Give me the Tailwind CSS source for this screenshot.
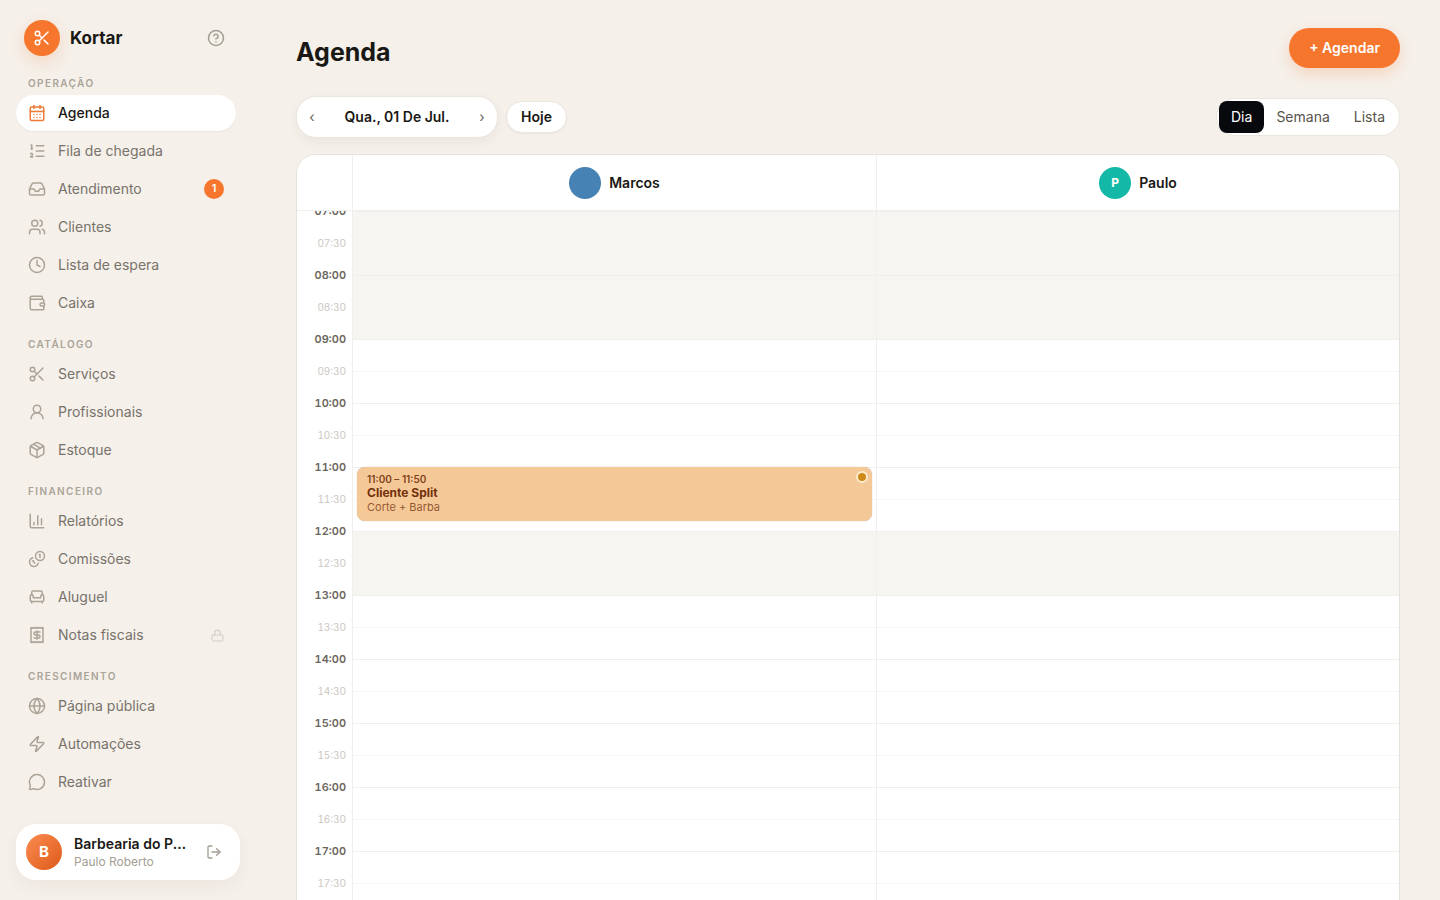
<!DOCTYPE html>
<html lang="pt-BR">
<head>
    <meta charset="UTF-8">
    <meta name="viewport" content="width=device-width, initial-scale=1.0">
    <title>Kortar - Agenda</title>
    <script src="https://cdn.jsdelivr.net/npm/@tailwindcss/browser@4"></script>
</head>
<body class="h-screen overflow-hidden flex bg-[#f5f0ea] font-['Inter',sans-serif] text-sm text-[#1a1814]">

    <!-- Menu lateral -->
    <aside class="w-64 h-screen shrink-0 flex flex-col px-4 py-5">
        <div class="flex items-center gap-2.5 pl-2 pr-[15px]">
            <span class="size-9 rounded-full bg-[#f7762e] text-white flex items-center justify-center shadow-[0_6px_16px_rgba(247,118,46,0.2)]">
                <svg class="size-[18px]" viewBox="0 0 24 24" fill="none" stroke="currentColor" stroke-width="2" stroke-linecap="round" stroke-linejoin="round"><circle cx="6" cy="6" r="3"/><path d="M8.12 8.12 12 12"/><path d="M20 4 8.12 15.88"/><circle cx="6" cy="18" r="3"/><path d="M14.8 14.8 20 20"/></svg>
            </span>
            <span class="text-[17px] font-bold leading-6">Kortar</span>
            <button type="button" aria-label="Ajuda" class="ml-auto text-[#a39e94]">
                <svg class="size-[18px]" viewBox="0 0 24 24" fill="none" stroke="currentColor" stroke-width="2" stroke-linecap="round" stroke-linejoin="round"><circle cx="12" cy="12" r="10"/><path d="M9.09 9a3 3 0 0 1 5.83 1c0 2-3 3-3 3"/><path d="M12 17h.01"/></svg>
            </button>
        </div>

        <nav class="flex-1 min-h-0 overflow-hidden mt-1 -mx-4 pl-4 pr-5 flex flex-col text-[#78736a]">
            <h2 class="mt-4 pb-1 px-3 text-[10px] leading-[15px] font-semibold tracking-[0.14em] text-[#aaa498]">OPERAÇÃO</h2>
            <div class="flex flex-col gap-0.5">
                <a href="#" aria-current="page" class="h-9 px-3 flex items-center gap-3 rounded-full bg-white font-medium text-[#1a1814] shadow-xs">
                    <svg class="size-[18px] text-[#ee7a35]" viewBox="0 0 24 24" fill="none" stroke="currentColor" stroke-width="2" stroke-linecap="round" stroke-linejoin="round"><path d="M8 2v4"/><path d="M16 2v4"/><rect width="18" height="18" x="3" y="4" rx="2"/><path d="M3 10h18"/><path d="M8 14h.01"/><path d="M12 14h.01"/><path d="M16 14h.01"/><path d="M8 18h.01"/><path d="M12 18h.01"/><path d="M16 18h.01"/></svg>
                    Agenda
                </a>
                <a href="#" class="h-9 px-3 flex items-center gap-3 rounded-full">
                    <svg class="size-[18px] text-[#aaa498]" viewBox="0 0 24 24" fill="none" stroke="currentColor" stroke-width="2" stroke-linecap="round" stroke-linejoin="round"><path d="M11 5h10"/><path d="M11 12h10"/><path d="M11 19h10"/><path d="M4 4h1v5"/><path d="M4 9h2"/><path d="M6.5 20H3.4c0-1 2.6-1.925 2.6-3.5a1.5 1.5 0 0 0-2.6-1.02"/></svg>
                    Fila de chegada
                </a>
                <a href="#" class="h-9 px-3 flex items-center gap-3 rounded-full">
                    <svg class="size-[18px] text-[#aaa498]" viewBox="0 0 24 24" fill="none" stroke="currentColor" stroke-width="2" stroke-linecap="round" stroke-linejoin="round"><path d="M22 12h-6l-2 3h-4l-2-3H2"/><path d="M5.45 5.11 2 12v6a2 2 0 0 0 2 2h16a2 2 0 0 0 2-2v-6l-3.45-6.89A2 2 0 0 0 16.76 4H7.24a2 2 0 0 0-1.79 1.11z"/></svg>
                    Atendimento
                    <span class="ml-auto size-5 rounded-full bg-[#f7762e] text-white text-[11px] font-semibold flex items-center justify-center">1</span>
                </a>
                <a href="#" class="h-9 px-3 flex items-center gap-3 rounded-full">
                    <svg class="size-[18px] text-[#aaa498]" viewBox="0 0 24 24" fill="none" stroke="currentColor" stroke-width="2" stroke-linecap="round" stroke-linejoin="round"><path d="M16 21v-2a4 4 0 0 0-4-4H6a4 4 0 0 0-4 4v2"/><circle cx="9" cy="7" r="4"/><path d="M22 21v-2a4 4 0 0 0-3-3.87"/><path d="M16 3.13a4 4 0 0 1 0 7.75"/></svg>
                    Clientes
                </a>
                <a href="#" class="h-9 px-3 flex items-center gap-3 rounded-full">
                    <svg class="size-[18px] text-[#aaa498]" viewBox="0 0 24 24" fill="none" stroke="currentColor" stroke-width="2" stroke-linecap="round" stroke-linejoin="round"><circle cx="12" cy="12" r="10"/><path d="M12 6v6l4 2"/></svg>
                    Lista de espera
                </a>
                <a href="#" class="h-9 px-3 flex items-center gap-3 rounded-full">
                    <svg class="size-[18px] text-[#aaa498]" viewBox="0 0 24 24" fill="none" stroke="currentColor" stroke-width="2" stroke-linecap="round" stroke-linejoin="round"><path d="M19 7V4a1 1 0 0 0-1-1H5a2 2 0 0 0 0 4h15a1 1 0 0 1 1 1v4h-3a2 2 0 0 0 0 4h3a1 1 0 0 0 1-1v-2a1 1 0 0 0-1-1"/><path d="M3 5v14a2 2 0 0 0 2 2h15a1 1 0 0 0 1-1v-4"/></svg>
                    Caixa
                </a>
            </div>

            <h2 class="mt-4 pb-1 px-3 text-[10px] leading-[15px] font-semibold tracking-[0.14em] text-[#aaa498]">CATÁLOGO</h2>
            <div class="flex flex-col gap-0.5">
                <a href="#" class="h-9 px-3 flex items-center gap-3 rounded-full">
                    <svg class="size-[18px] text-[#aaa498]" viewBox="0 0 24 24" fill="none" stroke="currentColor" stroke-width="2" stroke-linecap="round" stroke-linejoin="round"><circle cx="6" cy="6" r="3"/><path d="M8.12 8.12 12 12"/><path d="M20 4 8.12 15.88"/><circle cx="6" cy="18" r="3"/><path d="M14.8 14.8 20 20"/></svg>
                    Serviços
                </a>
                <a href="#" class="h-9 px-3 flex items-center gap-3 rounded-full">
                    <svg class="size-[18px] text-[#aaa498]" viewBox="0 0 24 24" fill="none" stroke="currentColor" stroke-width="2" stroke-linecap="round" stroke-linejoin="round"><circle cx="12" cy="8" r="5"/><path d="M20 21a8 8 0 0 0-16 0"/></svg>
                    Profissionais
                </a>
                <a href="#" class="h-9 px-3 flex items-center gap-3 rounded-full">
                    <svg class="size-[18px] text-[#aaa498]" viewBox="0 0 24 24" fill="none" stroke="currentColor" stroke-width="2" stroke-linecap="round" stroke-linejoin="round"><path d="M11 21.73a2 2 0 0 0 2 0l7-4A2 2 0 0 0 21 16V8a2 2 0 0 0-1-1.73l-7-4a2 2 0 0 0-2 0l-7 4A2 2 0 0 0 3 8v8a2 2 0 0 0 1 1.73z"/><path d="M12 22V12"/><path d="M3.29 7 12 12l8.71-5"/><path d="m7.5 4.27 9 5.15"/></svg>
                    Estoque
                </a>
            </div>

            <h2 class="mt-4 pb-1 px-3 text-[10px] leading-[15px] font-semibold tracking-[0.14em] text-[#aaa498]">FINANCEIRO</h2>
            <div class="flex flex-col gap-0.5">
                <a href="#" class="h-9 px-3 flex items-center gap-3 rounded-full">
                    <svg class="size-[18px] text-[#aaa498]" viewBox="0 0 24 24" fill="none" stroke="currentColor" stroke-width="2" stroke-linecap="round" stroke-linejoin="round"><path d="M3 3v16a2 2 0 0 0 2 2h16"/><path d="M18 17V9"/><path d="M13 17V5"/><path d="M8 17v-3"/></svg>
                    Relatórios
                </a>
                <a href="#" class="h-9 px-3 flex items-center gap-3 rounded-full">
                    <svg class="size-[18px] text-[#aaa498]" viewBox="0 0 24 24" fill="none" stroke="currentColor" stroke-width="2" stroke-linecap="round" stroke-linejoin="round"><path d="M13.744 17.736a6 6 0 1 1-7.48-7.48"/><path d="M15 6h1v4"/><path d="m6.134 14.768.866-.5 2 3.464"/><circle cx="16" cy="8" r="6"/></svg>
                    Comissões
                </a>
                <a href="#" class="h-9 px-3 flex items-center gap-3 rounded-full">
                    <svg class="size-[18px] text-[#aaa498]" viewBox="0 0 24 24" fill="none" stroke="currentColor" stroke-width="2" stroke-linecap="round" stroke-linejoin="round"><path d="M19 9V6a2 2 0 0 0-2-2H7a2 2 0 0 0-2 2v3"/><path d="M3 16a2 2 0 0 0 2 2h14a2 2 0 0 0 2-2v-5a2 2 0 0 0-4 0v1.5a.5.5 0 0 1-.5.5h-9a.5.5 0 0 1-.5-.5V11a2 2 0 0 0-4 0z"/><path d="M5 18v2"/><path d="M19 18v2"/></svg>
                    Aluguel
                </a>
                <a href="#" class="h-9 px-3 flex items-center gap-3 rounded-full">
                    <svg class="size-[18px] text-[#aaa498]" viewBox="0 0 24 24" fill="none" stroke="currentColor" stroke-width="2" stroke-linecap="round" stroke-linejoin="round"><path d="M4 2v20l2-1 2 1 2-1 2 1 2-1 2 1 2-1 2 1V2l-2 1-2-1-2 1-2-1-2 1-2-1-2 1Z"/><path d="M16 8h-6a2 2 0 1 0 0 4h4a2 2 0 1 1 0 4H8"/><path d="M12 17.5v-11"/></svg>
                    Notas fiscais
                    <svg class="ml-auto size-[13px] text-[#d3cec5]" viewBox="0 0 24 24" fill="none" stroke="currentColor" stroke-width="2" stroke-linecap="round" stroke-linejoin="round"><rect width="20" height="11" x="2" y="11" rx="2"/><path d="M7 11V7a5 5 0 0 1 10 0v4"/></svg>
                </a>
            </div>

            <h2 class="mt-4 pb-1 px-3 text-[10px] leading-[15px] font-semibold tracking-[0.14em] text-[#aaa498]">CRESCIMENTO</h2>
            <div class="flex flex-col gap-0.5">
                <a href="#" class="h-9 px-3 flex items-center gap-3 rounded-full">
                    <svg class="size-[18px] text-[#aaa498]" viewBox="0 0 24 24" fill="none" stroke="currentColor" stroke-width="2" stroke-linecap="round" stroke-linejoin="round"><circle cx="12" cy="12" r="10"/><path d="M12 2a14.5 14.5 0 0 0 0 20 14.5 14.5 0 0 0 0-20"/><path d="M2 12h20"/></svg>
                    Página pública
                </a>
                <a href="#" class="h-9 px-3 flex items-center gap-3 rounded-full">
                    <svg class="size-[18px] text-[#aaa498]" viewBox="0 0 24 24" fill="none" stroke="currentColor" stroke-width="2" stroke-linecap="round" stroke-linejoin="round"><path d="M4 14a1 1 0 0 1-.78-1.63l9.9-10.2a.5.5 0 0 1 .86.46l-1.92 6.02A1 1 0 0 0 13 10h7a1 1 0 0 1 .78 1.63l-9.9 10.2a.5.5 0 0 1-.86-.46l1.92-6.02A1 1 0 0 0 11 14z"/></svg>
                    Automações
                </a>
                <a href="#" class="h-9 px-3 flex items-center gap-3 rounded-full">
                    <svg class="size-[18px] text-[#aaa498]" viewBox="0 0 24 24" fill="none" stroke="currentColor" stroke-width="2" stroke-linecap="round" stroke-linejoin="round"><path d="M2.992 16.342a2 2 0 0 1 .094 1.167l-1.065 3.29a1 1 0 0 0 1.236 1.168l3.413-.998a2 2 0 0 1 1.099.092 10 10 0 1 0-4.777-4.719"/></svg>
                    Reativar
                </a>
            </div>
        </nav>

        <!-- Conta -->
        <div class="shrink-0 flex items-center rounded-[20px] bg-white p-2.5 shadow-[0_6px_16px_rgba(60,40,20,0.05)]">
            <span class="size-9 shrink-0 rounded-full bg-linear-to-br from-[#fb8b4e] to-[#dd5a16] text-white text-[15px] font-bold flex items-center justify-center">B</span>
            <div class="ml-3 w-[116px] min-w-0">
                <p class="truncate font-semibold leading-5">Barbearia do Paulo</p>
                <p class="truncate text-xs text-[#a39e94]">Paulo Roberto</p>
            </div>
            <button type="button" aria-label="Sair" class="ml-auto p-2 text-[#a39e94]">
                <svg class="size-4" viewBox="0 0 24 24" fill="none" stroke="currentColor" stroke-width="2" stroke-linecap="round" stroke-linejoin="round"><path d="M9 21H5a2 2 0 0 1-2-2V5a2 2 0 0 1 2-2h4"/><path d="m16 17 5-5-5-5"/><path d="M21 12H9"/></svg>
            </button>
        </div>
    </aside>

    <main class="flex-1 min-w-0 px-10 pt-7">
        <header class="flex items-start justify-between">
            <h1 class="pt-2 text-[25px] leading-8 font-bold">Agenda</h1>
            <button type="button" class="h-10 px-5 rounded-full bg-[#f7762e] text-white font-semibold shadow-[0_6px_14px_rgba(247,118,46,0.22)]">+ Agendar</button>
        </header>

        <div class="mt-7 flex items-center justify-between">
            <div class="flex items-center gap-2">
                <div class="h-[42px] w-[202px] px-1 flex items-center justify-between rounded-[20px] border border-[#ebe6de] bg-white shadow-[0_4px_12px_rgba(60,40,20,0.05)]">
                    <button type="button" aria-label="Dia anterior" class="w-[22px] text-[#6b665d]">‹</button>
                    <span class="font-semibold">Qua., 01 De Jul.</span>
                    <button type="button" aria-label="Próximo dia" class="w-[22px] text-[#6b665d]">›</button>
                </div>
                <button type="button" class="h-8 px-3.5 rounded-full border border-[#ebe6de] bg-white font-semibold shadow-xs">Hoje</button>
            </div>
            <div class="flex rounded-[20px] border border-[#ebe6de] bg-white p-0.5 text-[#57534b]">
                <button type="button" class="h-8 px-3 rounded-lg bg-[#08090c] text-white">Dia</button>
                <button type="button" class="h-8 px-3 rounded-lg">Semana</button>
                <button type="button" class="h-8 px-3 rounded-lg">Lista</button>
            </div>
        </div>

        <!-- Grade do dia -->
        <div class="mt-4 overflow-hidden rounded-[20px] border border-[#e5e2dc] bg-white">
            <table class="w-full table-fixed border-separate border-spacing-0">
                <thead>
                    <tr class="h-14">
                        <th class="relative z-10 w-14 bg-white border-r border-b border-[#f1efeb]"></th>
                        <th scope="col" class="relative z-10 bg-white p-0 border-b border-[#f1efeb]">
                            <div class="flex items-center justify-center gap-2 font-semibold">
                                <span class="size-8 rounded-full bg-[#4682b4]"></span>
                                Marcos
                            </div>
                        </th>
                        <th scope="col" class="relative z-10 bg-white p-0 border-l border-b border-[#f1efeb]">
                            <div class="flex items-center justify-center gap-2 font-semibold">
                                <span class="size-8 rounded-full bg-[#14b8a6] text-white text-xs font-bold flex items-center justify-center">P</span>
                                Paulo
                            </div>
                        </th>
                    </tr>
                </thead>
                <tbody id="slots"></tbody>
            </table>
        </div>
    </main>

    <template id="appointment">
        <div class="absolute z-[1] -top-px inset-x-1 h-[54px] rounded-lg bg-[#f5c898] px-2.5 py-1.5 text-[11px] text-[#713009] shadow-[0_0_1px_rgba(60,40,20,0.4)]">
            <p class="text-[10px] leading-3 font-semibold text-[#713009]/90">11:00 – 11:50</p>
            <p class="text-xs leading-4 font-bold">Cliente Split</p>
            <p class="leading-3 text-[#713009]/75">Corte + Barba</p>
            <span class="absolute top-1 right-1 size-3 rounded-full border-2 border-[#fdeccb] bg-[#d08a1c]"></span>
        </div>
    </template>

    <script>
        const slots = document.getElementById('slots');

        // intervalos fechados: antes das 9h e almoço
        const isClosed = (hour) => hour < 9 || hour === 12;

        for (let hour = 7; hour < 20; hour++) {
            for (const minute of ['00', '30']) {
                const full = minute === '00';
                const label = full ? 'text-[11px] font-semibold text-[#6b665d]' : 'text-[10px] font-normal text-[#cbc7c0]';
                const cell = (isClosed(hour) ? 'bg-[#f6f5f2] ' : '') + (full ? 'border-t-[#f1efec]' : 'border-t-[#f8f7f5]');
                const row = document.createElement('tr');
                row.className = 'h-8';
                row.innerHTML = `
                    <th scope="row" class="p-0 pr-1.5 align-top text-right border-r border-r-[#f1efeb]">
                        <span class="block -mt-2 leading-4 tabular-nums ${label}">${String(hour).padStart(2, '0')}:${minute}</span>
                    </th>
                    <td class="relative p-0 border-t ${cell}"></td>
                    <td class="p-0 border-t border-l border-l-[#f1efeb] ${cell}"></td>`;
                if (hour === 11 && full) {
                    row.children[1].append(document.getElementById('appointment').content.cloneNode(true));
                }
                slots.append(row);
            }
        }
    </script>
</body>
</html>
